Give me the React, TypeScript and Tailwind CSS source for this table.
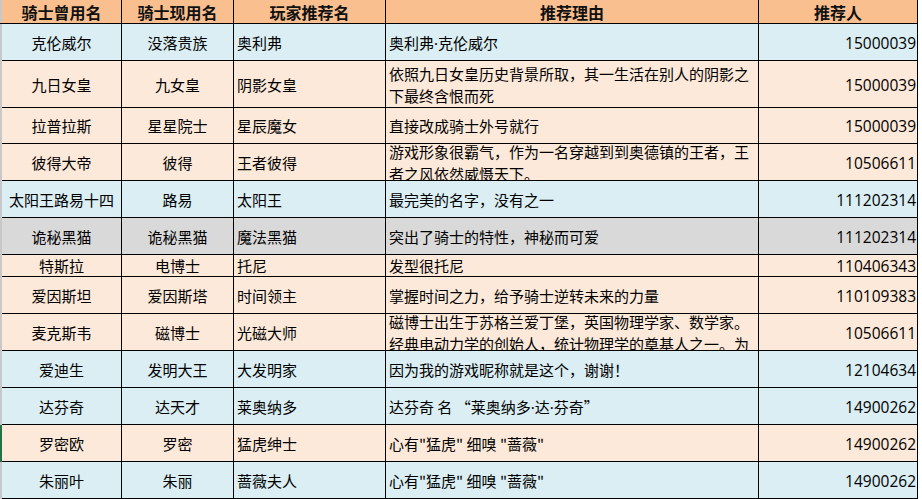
import React from "react";

type Row = {
  a: string;
  b: string;
  c: string;
  d: string;
  e: string;
  bg: string;
  h: string;
  top?: boolean;
  mark?: boolean;
};

const BLUE = "bg-[#DAEEF3]";
const PEACH = "bg-[#FDE9D9]";
const GRAY = "bg-[#D9D9D9]";

const rows: Row[] = [
  { a: "克伦威尔", b: "没落贵族", c: "奥利弗", d: "奥利弗·克伦威尔", e: "15000039", bg: BLUE, h: "h-[37px]" },
  { a: "九日女皇", b: "九女皇", c: "阴影女皇", d: "依照九日女皇历史背景所取，其一生活在别人的阴影之下最终含恨而死", e: "15000039", bg: PEACH, h: "h-[47px]" },
  { a: "拉普拉斯", b: "星星院士", c: "星辰魔女", d: "直接改成骑士外号就行", e: "15000039", bg: PEACH, h: "h-[36px]" },
  { a: "彼得大帝", b: "彼得", c: "王者彼得", d: "游戏形象很霸气，作为一名穿越到到奥德镇的王者，王者之风依然威慑天下。", e: "10506611", bg: PEACH, h: "h-[37px]", top: true },
  { a: "太阳王路易十四", b: "路易", c: "太阳王", d: "最完美的名字，没有之一", e: "111202314", bg: BLUE, h: "h-[37px]" },
  { a: "诡秘黑猫", b: "诡秘黑猫", c: "魔法黑猫", d: "突出了骑士的特性，神秘而可爱", e: "111202314", bg: GRAY, h: "h-[37px]" },
  { a: "特斯拉", b: "电博士", c: "托尼", d: "发型很托尼", e: "110406343", bg: PEACH, h: "h-[22px]" },
  { a: "爱因斯坦", b: "爱因斯塔", c: "时间领主", d: "掌握时间之力，给予骑士逆转未来的力量", e: "110109383", bg: PEACH, h: "h-[37px]" },
  { a: "麦克斯韦", b: "磁博士", c: "光磁大师", d: "磁博士出生于苏格兰爱丁堡，英国物理学家、数学家。经典电动力学的创始人，统计物理学的奠基人之一。为电磁学的发展奠定了坚实的理论基础。", e: "10506611", bg: PEACH, h: "h-[37px]", top: true },
  { a: "爱迪生", b: "发明大王", c: "大发明家", d: "因为我的游戏昵称就是这个，谢谢！", e: "12104634", bg: BLUE, h: "h-[37px]" },
  { a: "达芬奇", b: "达天才", c: "莱奥纳多", d: "达芬奇 名 “莱奥纳多·达·芬奇”", e: "14900262", bg: BLUE, h: "h-[37px]" },
  { a: "罗密欧", b: "罗密", c: "猛虎绅士", d: "心有\"猛虎\" 细嗅 \"蔷薇\"", e: "14900262", bg: PEACH, h: "h-[37px]", mark: true },
  { a: "朱丽叶", b: "朱丽", c: "蔷薇夫人", d: "心有\"猛虎\" 细嗅 \"蔷薇\"", e: "14900262", bg: BLUE, h: "h-[37px]" },
];

const cjk = { fontFamily: '"Noto Sans CJK SC", "Noto Sans", sans-serif' };
const num = { fontFamily: '"Open Sans", "Noto Sans", sans-serif' };
const dotFont = { fontFamily: '"Noto Sans", "Open Sans", sans-serif' };

function withDots(s: string) {
  const parts = s.split("·");
  return parts.map((p, i) => (
    <React.Fragment key={i}>
      {p}
      {i < parts.length - 1 && <span style={dotFont}>·</span>}
    </React.Fragment>
  ));
}

function HeaderCell({ w, children }: { w: string; children: React.ReactNode }) {
  return (
    <div
      className={`${w} shrink-0 h-full flex items-center justify-center border-b border-r border-black font-bold text-[16px] text-[#111]`}
    >
      {children}
    </div>
  );
}

export default function App() {
  return (
    <div className="w-[922px] h-[499px] bg-white overflow-hidden text-black" style={cjk}>
      <div className="flex flex-col w-[918px]">
        <div className="flex h-[24px] bg-[#FABF8F]">
          <div className="w-[2px] shrink-0 h-full bg-[#C8C8C8] border-b border-black" />
          <HeaderCell w="w-[120px]">骑士曾用名</HeaderCell>
          <HeaderCell w="w-[112px]">骑士现用名</HeaderCell>
          <HeaderCell w="w-[152px]">玩家推荐名</HeaderCell>
          <HeaderCell w="w-[373px]">推荐理由</HeaderCell>
          <HeaderCell w="w-[159px]">推荐人</HeaderCell>
        </div>
        {rows.map((r, i) => (
          <div key={i} className={`flex ${r.h} ${r.bg} text-[15px]`}>
            <div className={`w-[2px] shrink-0 h-full ${r.mark ? "bg-[#217346]" : "bg-[#C8C8C8]"}`} />
            <div className="w-[120px] shrink-0 h-full flex items-center justify-center border-b border-r border-black overflow-hidden pt-[1px] leading-[22px] whitespace-nowrap">
              {r.a}
            </div>
            <div className="w-[112px] shrink-0 h-full flex items-center justify-center border-b border-r border-black overflow-hidden pt-[1px] leading-[22px] whitespace-nowrap">
              {r.b}
            </div>
            <div className="w-[152px] shrink-0 h-full flex items-center border-b border-r border-black overflow-hidden pl-[3px] pt-[1px] leading-[22px] whitespace-nowrap">
              {r.c}
            </div>
            <div
              className={`w-[373px] shrink-0 h-full flex border-b border-r border-black overflow-hidden pl-[3px] pr-[4px] leading-[22px] ${
                r.top ? "items-start" : "items-center pt-[1px]"
              }`}
            >
              <div className={r.top ? "-mt-[3px]" : ""}>{withDots(r.d)}</div>
            </div>
            <div
              className="w-[159px] shrink-0 h-full flex items-center justify-end border-b border-r border-black overflow-hidden pr-[1px] pt-[1px] text-[15.5px] leading-[22px]"
              style={num}
            >
              {r.e}
            </div>
          </div>
        ))}
      </div>
    </div>
  );
}
